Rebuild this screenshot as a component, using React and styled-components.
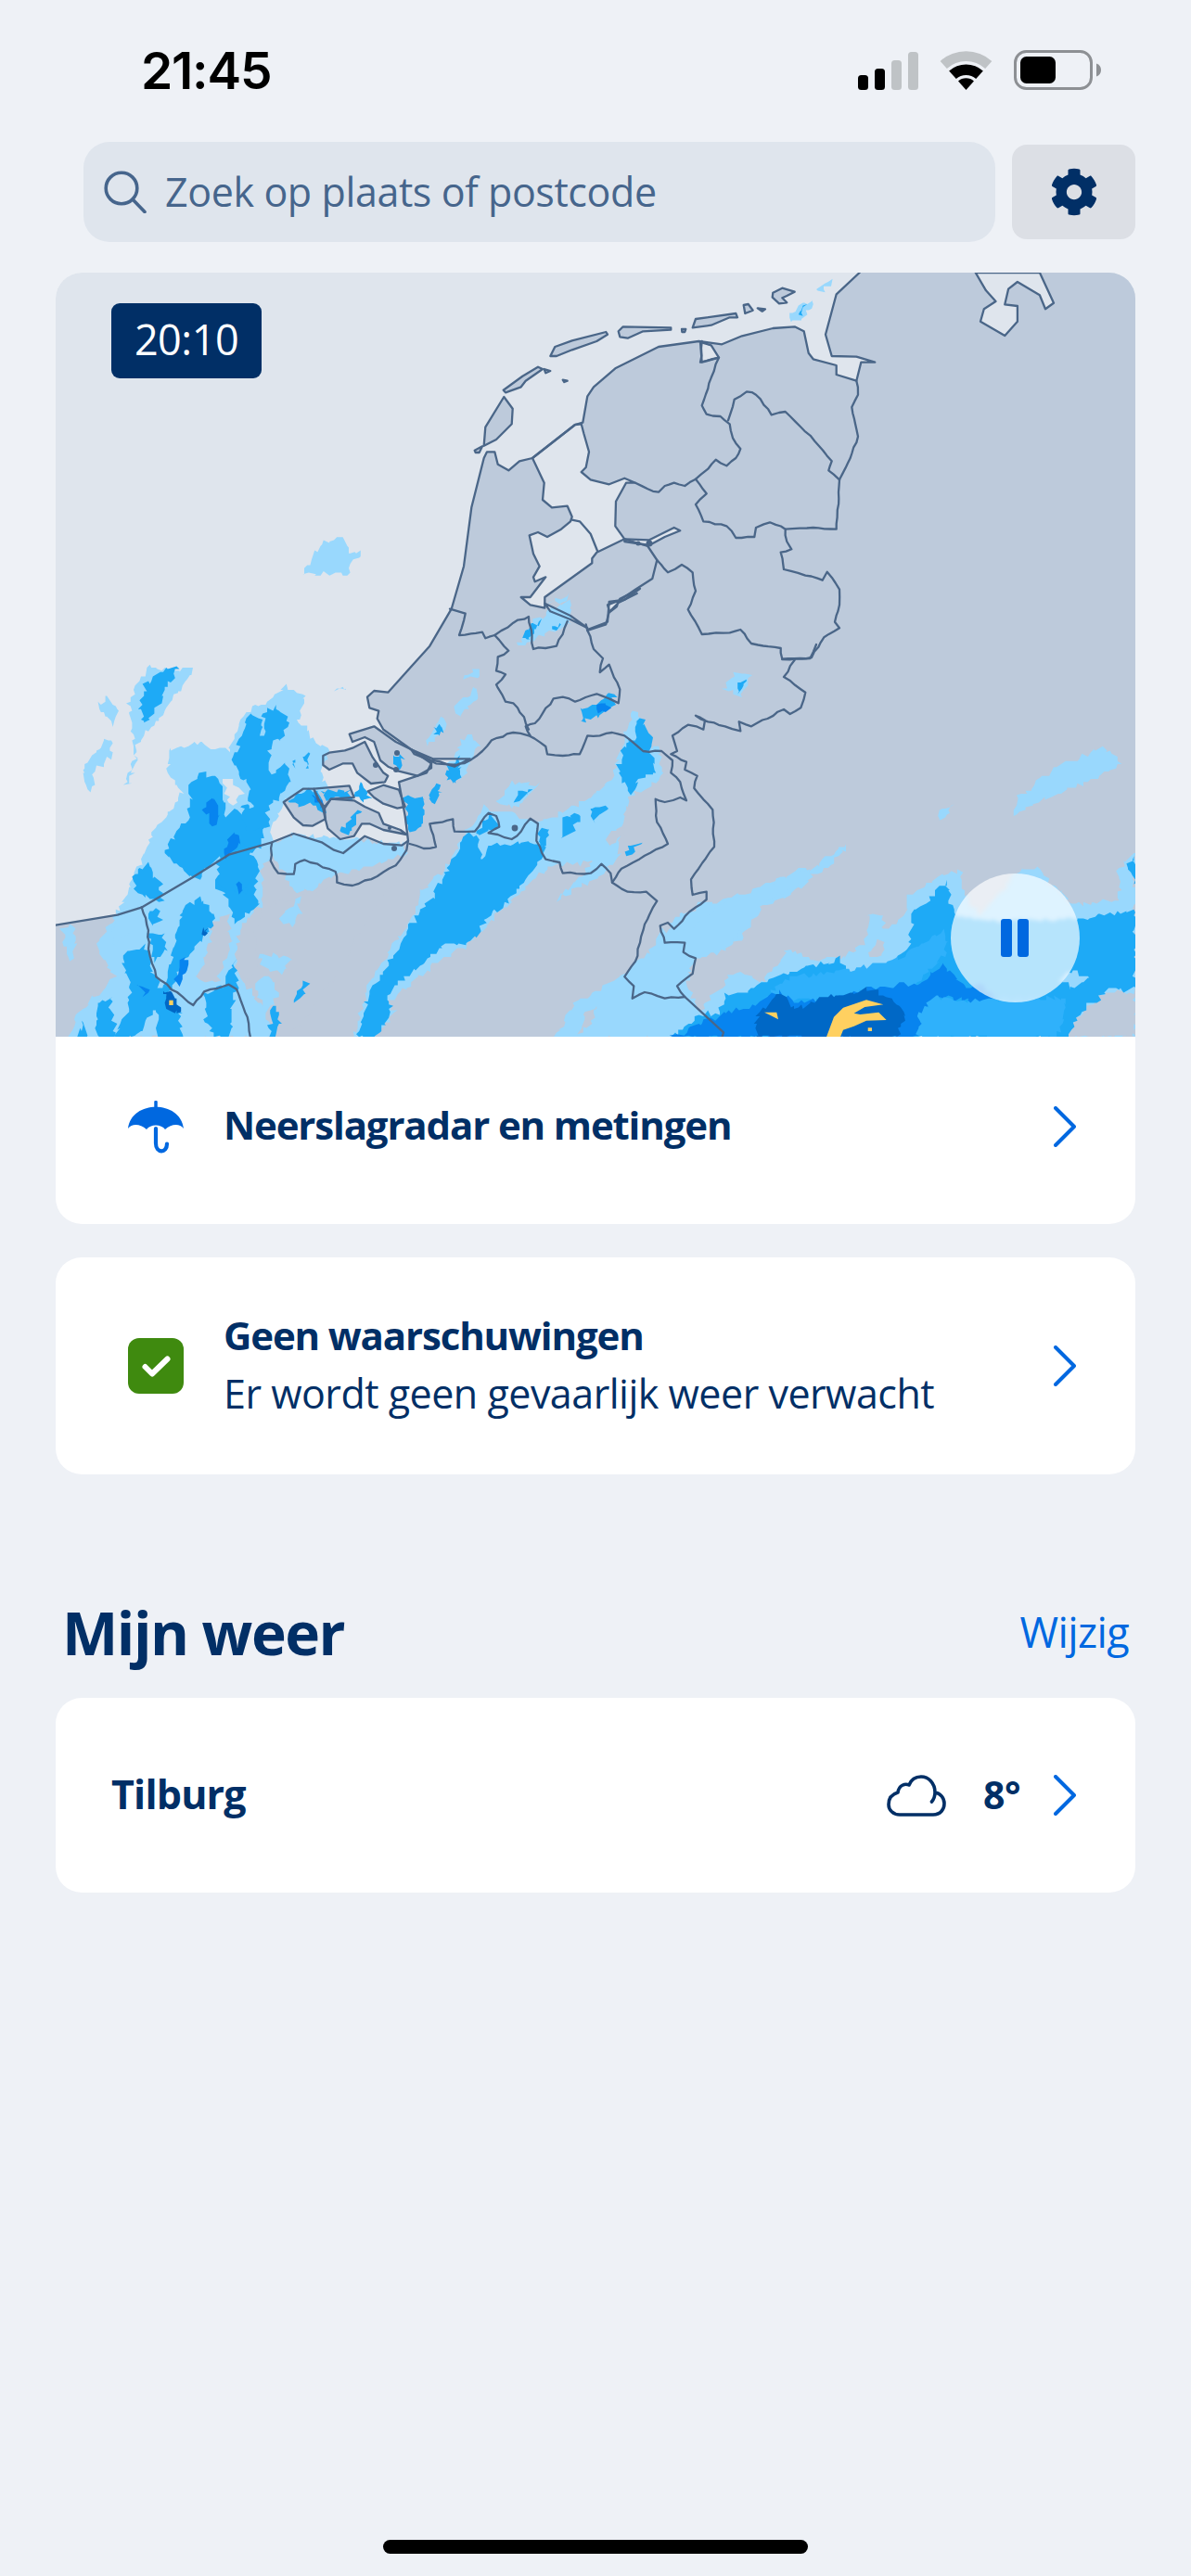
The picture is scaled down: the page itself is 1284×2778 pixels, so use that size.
import React from 'react';
import styled, { createGlobalStyle } from 'styled-components';
import { FaCog } from 'react-icons/fa';

const Global = createGlobalStyle`
  html, body { margin: 0; padding: 0; background: #eef1f6; }
  * { box-sizing: border-box; }
`;

const navy = '#012f66';
const blue = '#0068e0';
const sans = '"Open Sans", "Noto Sans", sans-serif';

const Page = styled.div`
  width: 1284px;
  height: 2778px;
  background: #eef1f6;
  font-family: ${sans};
  color: ${navy};
  display: flex;
  flex-direction: column;
  overflow: hidden;
`;
const StatusBar = styled.div`
  height: 153px;
  padding: 54px 97px 0 152px;
  display: flex;
  justify-content: space-between;
  align-items: flex-start;
`;
const Clock = styled.div`
  font-family: Inter, "Liberation Sans", sans-serif;
  font-weight: 600;
  font-size: 55px;
  line-height: 44px;
  color: #000;
  letter-spacing: -1.2px;
`;
const StatusIcons = styled.div`
  display: flex;
  align-items: flex-end;
  gap: 23px;
`;
const SearchRow = styled.div`
  display: flex;
  align-items: center;
  gap: 18px;
  padding: 0 60px 0 90px;
`;
const SearchBox = styled.div`
  flex: 1;
  height: 108px;
  border-radius: 28px;
  background: #dfe5ed;
  display: flex;
  align-items: center;
  gap: 20px;
  padding: 0 0 0 22px;
`;
const Placeholder = styled.span`
  font-size: 43px;
  letter-spacing: -0.4px;
  color: #46658c;
  position: relative;
  top: -1px;
`;
const SettingsButton = styled.div`
  width: 133px;
  height: 102px;
  border-radius: 16px;
  background: #dcdfe5;
  display: flex;
  align-items: center;
  justify-content: center;
  color: ${navy};
`;
const Card = styled.div`
  margin: ${p => p.$top}px 60px 0;
  background: #fff;
  border-radius: 28px;
  overflow: hidden;
`;
const MapArea = styled.div`
  position: relative;
  height: 824px;
  background: #dfe5ed;
  svg { display: block; }
`;
const TimeBadge = styled.div`
  position: absolute;
  left: 60px;
  top: 33px;
  width: 162px;
  height: 81px;
  border-radius: 9px;
  background: ${navy};
  color: #fff;
  font-size: 45px;
  line-height: 78px;
  display: flex;
  align-items: flex-start;
  justify-content: center;
  letter-spacing: -0.5px;
`;
const PauseButton = styled.div`
  position: absolute;
  left: 964.5px;
  top: 647.5px;
  width: 139px;
  height: 139px;
  border-radius: 50%;
  background: rgba(255, 255, 255, 0.68);
  backdrop-filter: blur(2px);
  display: flex;
  align-items: center;
  justify-content: center;
  gap: 6px;
`;
const PauseBar = styled.span`
  width: 12px;
  height: 41px;
  border-radius: 3px;
  background: ${blue};
`;
const Row = styled.div`
  height: ${p => p.$h}px;
  padding: ${p => p.$pt || 0}px 64px ${p => p.$pb || 0}px 78px;
  display: flex;
  align-items: center;
`;
const IconSlot = styled.div`
  width: 60px;
  flex: none;
  margin-right: 43px;
  display: flex;
  svg { display: block; }
`;
const RowText = styled.div`
  flex: 1;
  display: flex;
  flex-direction: column;
`;
const RowTitle = styled.div`
  font-size: 42px;
  font-weight: 700;
  line-height: 62px;
  letter-spacing: -1.15px;
  position: relative;
  top: -2px;
`;
const RowSub = styled.div`
  font-size: 43px;
  line-height: 62px;
  letter-spacing: -0.5px;
  position: relative;
  top: -1px;
`;
const SectionHead = styled.div`
  margin-top: 122px;
  height: 98px;
  padding: 0 7px 0 7px;
  margin-left: 60px;
  margin-right: 60px;
  display: flex;
  justify-content: space-between;
  align-items: baseline;
`;
const SectionTitle = styled.h2`
  margin: 0;
  font-size: 64px;
  line-height: 98px;
  font-weight: 700;
  letter-spacing: -1.5px;
`;
const EditLink = styled.span`
  font-size: 45px;
  color: ${blue};
  letter-spacing: -0.6px;
  position: relative;
  top: -8px;
`;
const PlaceRow = styled.div`
  height: 210px;
  padding: 0 64px 0 60px;
  display: flex;
  align-items: center;
`;
const PlaceName = styled.div`
  flex: 1;
  font-size: 43px;
  font-weight: 700;
  letter-spacing: -0.8px;
  position: relative;
  top: -2px;
`;
const Temp = styled.div`
  font-size: 41px;
  font-weight: 700;
  margin: 0 36px 0 40px;
  letter-spacing: -0.5px;
  position: relative;
  top: -1px;
`;
const HomeBar = styled.div`
  margin: auto auto 24px;
  width: 458px;
  height: 15px;
  border-radius: 8px;
  background: #000;
`;

/* map geometry helpers: points are written in the coordinates of the traced crops */
const frames = {
  a: [60, 720, 3, 3],
  b: [500, 294, 3, 3],
  c: [380, 640, 3, 3],
  d: [724, 760, 3, 3],
  e: [60, 290, 1.329, 3],
};
const pts = (f, s) =>
  s.trim().split(/\s+/).map(p => {
    const [x, y] = p.split(',').map(Number);
    const t = frames[f];
    return [t[0] + x / t[2], t[1] + y / t[3]];
  });
const toD = list => 'M' + list.map(p => `${p[0].toFixed(1)} ${p[1].toFixed(1)}`).join('L');
const open = (f, s) => toD(pts(f, s));
const shut = (f, s) => open(f, s) + 'Z';

let seed = 12345;
const rnd = () => {
  seed = (seed * 1664525 + 1013904223) % 4294967296;
  return seed / 4294967296;
};
const jag = (f, s) => {
  const p = pts(f, s);
  const out = [];
  p.forEach((a, i) => {
    const b = p[(i + 1) % p.length];
    const len = Math.hypot(b[0] - a[0], b[1] - a[1]);
    const n = Math.max(1, Math.round(len / 4));
    for (let k = 0; k < n; k++) {
      const x = a[0] + ((b[0] - a[0]) * k) / n + (rnd() - 0.5) * 6;
      const y = a[1] + ((b[1] - a[1]) * k) / n + (rnd() - 0.5) * 6;
      out.push([Math.round(x / 1.6) * 1.6, Math.round(y / 1.6) * 1.6]);
    }
  });
  return toD(out) + 'Z';
};
const wobble = (f, s) => {
  const p = pts(f, s);
  const out = [];
  p.forEach((a, i) => {
    const b = p[i + 1];
    if (!b) { out.push(a); return; }
    const len = Math.hypot(b[0] - a[0], b[1] - a[1]);
    const n = Math.max(1, Math.round(len / 7));
    for (let k = 0; k < n; k++) {
      const j = k === 0 ? 0 : 1.8;
      out.push([
        a[0] + ((b[0] - a[0]) * k) / n + (rnd() - 0.5) * j,
        a[1] + ((b[1] - a[1]) * k) / n + (rnd() - 0.5) * j,
      ]);
    }
  });
  return toD(out);
};

const coastA =
  open('a', '0,833 200,800 280,775 440,680 560,605 700,565 770,537 860,565 900,590 930,600 1000,545 1060,570 1120,575 1140,560 1130,480 1110,370 1200,340 1215,310 1150,265 1060,200 1040,165 1045,140 1015,130 1008,95 1030,75 1075,80 1147,0') +
  open('c', '250,170 320,50').replace('M', 'L') +
  open('b', '0,950 25,760 65,600 75,580 100,580 110,620 145,640 180,610 222,600 360,492 385,485 400,400 420,370 490,310 630,240 760,222 835,232 900,205 1000,180 1070,175 1100,190 1115,260 1130,280 1205,300 1205,330 1270,350 1285,290 1330,290 1270,272 1190,270 1170,200 1205,70 1280,0').replace('M', 'L');
const landFill = coastA + 'L1224 294L1224 1118L60 1118Z';

const waterShapes = [
  shut('b', '222,600 360,492 380,490 388,520 405,580 395,630 380,645 410,670 470,685 520,665 555,680 525,680 492,740 490,820 520,862 430,905 415,925 415,940 262,1050 262,1085 215,1075 185,1050 215,1050 265,985 230,1000 225,985 245,950 225,910 212,850 240,840 270,855 315,830 345,805 350,790 335,755 285,760 255,735 260,680'),
  shut('b', '262,1070 345,1110 400,1150 345,1122 280,1096'),
  shut('b', '465,1075 500,1062 495,1080 472,1098'),
  shut('b', '505,1055 570,1022 520,1058 500,1066'),
  shut('b', '520,862 600,865 680,825 700,835 650,855 600,882 520,870'),
  shut('b', '765,225 800,235 825,275 770,290'),
  shut('a', '1150,265 1220,295 1340,295 1300,315 1230,310 1210,300 1160,280'),
  shut('e', '1318,12 1333,70 1347,105 1330,130 1325,170 1360,216 1378,170 1378,120 1360,115 1365,65 1378,42 1410,85 1418,130 1430,110 1410,12'),
];
const islands = [
  'b|65,560 70,500 130,402 158,440 155,490 105,540',
  'b|35,575 60,562 50,582 38,582',
  'b|128,380 190,335 240,305 255,312 200,350 185,370 135,388',
  'b|280,270 295,240 350,220 460,192 465,200 430,222 350,250 300,270',
  'b|500,190 515,175 670,178 670,185 580,190 530,212 505,208',
  'b|740,178 750,150 880,132 885,145 860,145 800,170',
  'b|905,105 920,102 935,122 910,132',
  'b|950,115 975,118 965,125',
  'b|1000,65 1030,50 1070,62 1045,75 1030,82 1045,97 1020,100 998,80',
  'b|260,312 280,318 265,325',
  'b|320,347 335,350 325,354',
  'b|705,183 718,183 715,192 706,192',
  'a|950,215 1030,190 1100,240 1150,265 1215,300 1215,325 1170,350 1110,335 1075,320 1050,300 1030,240 1000,225 960,240',
  'a|935,268 960,260 1000,240 1025,290 1060,340 1075,350 1065,370 1020,375 975,340 960,310 930,310 885,330 865,315 865,285 885,275',
  'a|835,392 950,382 965,420 890,425 870,450 850,430',
  'a|737,435 800,392 835,392 865,455 872,490 830,512 800,510 770,485',
  'a|870,455 890,425 965,430 1000,450 1045,470 1060,505 1115,525 1135,540 1060,525 1015,505 990,505 965,545 920,555 880,520 872,490',
  'a|1010,400 1060,380 1110,395 1130,450 1105,455 1060,440 1030,420',
].map(s => { const [f, v] = s.split('|'); return shut(f, v); });

const borders = [
  wobble('a', '278,775 300,850 300,910 325,1000 445,1092 480,1048 560,1025 585,1040 620,1130 630,1197'),
  wobble('a', '700,565 695,625 720,665 770,668 775,635 805,622 905,660 910,695 960,705 1040,675 1100,640 1135,590 1140,560'),
  wobble('b', '770,222 765,290 825,275 800,340 790,375 770,430 785,458 830,465 860,490 870,535 895,570 880,600 850,625 815,605 790,635 750,668 715,690 680,680 650,690 630,710 595,700 555,680'),
  wobble('b', '855,478 875,410 915,385 945,395 995,460 1040,450 1135,545 1190,610 1180,640 1215,670'),
  wobble('b', '1270,350 1275,395 1255,435 1275,530 1250,600 1215,670 1205,830 1130,825 1040,830'),
  wobble('b', '750,668 785,715 750,750 775,805 850,820 880,858 940,855 945,825 990,808 1040,830 1045,870 1060,895 1025,905 1035,960 1105,980 1160,995 1175,968 1215,1025 1215,1075 1200,1130 1215,1150 1165,1180 1125,1245 1030,1250 1025,1215 930,1200 895,1155 860,1165 770,1170 725,1090 750,1030 740,970 705,945 660,970 625,930'),
  open('b', '350,800 375,805 410,845 432,900'),
  open('b', '595,885 625,930 610,990 555,1025 505,1060 470,1065 465,1130 400,1155'),
  open('b', '520,862 595,885'),
  wobble('c', '1390,213 1480,210 1500,165'),
  wobble('c', '1430,215 1395,270 1465,320 1450,370 1415,390 1395,375 1290,430 1250,415 1255,445 1205,430 1150,415 1110,395 1140,410 1135,440 1085,425 1035,460 1050,510 1030,520 1080,545 1075,570 1115,590 1105,630 1165,700 1170,820 1095,925 1100,975 1145,965 1145,990 1090,1030 1040,1085 1020,1065 995,1075 1010,1130 1075,1130 1070,1160 1110,1180 1100,1230 1050,1270 1075,1305 1010,1310 945,1290 905,1310 910,1270 880,1240 915,1190 930,1130 945,1070 960,1040 985,995 950,965 890,965 840,935 835,905 805,875 770,905 680,905 670,870 625,860 595,800 600,745 575,728 545,770 515,795 470,780 440,775 475,755 465,720 440,710 395,770 330,770 325,730 250,745 270,820 230,825 185,810'),
  open('c', '1075,1305 1200,1420 1195,1437'),
  wobble('c', '840,935 870,890 1020,810 985,740 980,665 1010,675 1060,660 1080,670 1060,610 1030,580 1035,540 1000,510 940,510 880,460 840,450 800,460 760,460 735,520 680,525 630,520 625,495 570,460 520,450 450,475 420,510 380,540 330,560 260,540'),
  wobble('c', '575,460 560,430 590,420 650,340 680,335 720,350 790,325 860,355 865,310 830,230 800,255 810,210 780,180 760,120 755,100'),
  wobble('c', '570,440 555,400 520,355 495,350 470,305 465,295 495,262 465,250 470,205 505,185 460,135 430,145 420,125 345,135 365,65 315,50'),
  wobble('c', '460,135 520,95 570,75 585,180 660,170 695,90'),
  open('c', '760,120 820,100 830,60 860,30 920,0'),
];

const L = '#99d8fd', M = '#1eaaf6', M2 = '#2fb1fb', D = '#0784ef', X = '#0068c6', Y = '#ffd060';
const rainSets = [
  [L, 'a', '300,0 440,10 420,50 370,110 330,170 300,200 270,230 240,380 225,385 260,290 250,220 235,110 270,50'],
  [L, 'a', '140,130 165,90 200,130 190,185 150,150'],
  [L, 'a', '85,330 130,270 170,225 185,280 130,330 115,395'],
  [L, 'a', '900,70 925,55 945,68'],
  [L, 'a', '365,265 470,245 560,270 610,150 700,100 745,60 805,85 780,170 830,220 880,270 860,340 880,395 740,430 700,520 700,570 770,540 1000,560 1130,570 1135,600 1000,650 880,680 830,720 770,720 700,600 670,640 660,770 600,830 580,920 590,1000 650,1070 720,1197 40,1197 70,1130 130,1060 190,1000 130,900 190,810 220,750 270,640 320,530 390,430 410,400 365,330'],
  [L, 'a', '20,840 60,830 70,900 50,950'],
  [L, 'a', '190,800 290,760 240,860 180,900'],
  ['#dfe5ed', 'a', '540,350 575,370 610,410 570,440 550,400'],
  ['#bdcadb', 'a', '505,830 560,800 565,900 545,960 520,1020 460,1000 500,900'],
  ['#bdcadb', 'a', '610,1000 650,990 660,960 640,850 680,770 790,740 1140,620 900,1000 760,1197 730,1197 670,1060'],
  [L, 'a', '655,935 700,930 760,945 730,990 690,985'],
  [L, 'a', '655,1010 700,1000 720,1070 680,1110 650,1060'],
  [L, 'a', '720,810 790,745 790,800 760,835'],
  [L, 'c', '430,690 600,740 740,680 830,610 880,490 990,500 1000,600 900,660 860,760 860,860 780,930 660,990 780,870 640,880 560,950 430,1080 370,1145 290,1180 110,1330 140,1350 70,1437 0,1437 60,1250 200,1040 210,970 310,880 360,780'],
  ['#bdcadb', 'c', '820,790 880,750 870,790 830,820'],
  [L, 'c', '910,375 960,460 880,500 890,430'],
  [L, 'c', '530,175 590,85 700,20 710,100 640,125 570,155'],
  [L, 'c', '625,40 650,20 700,0 690,20'],
  [L, 'c', '1200,310 1240,260 1290,270 1250,330'],
  [L, 'c', '240,490 280,400 300,410 290,450'],
  [L, 'c', '330,360 400,300 405,345 345,400'],
  [L, 'c', '330,540 350,470 385,465 415,490 350,600 300,560'],
  [L, 'c', '470,670 510,610 600,620 530,695'],
  [L, 'c', '360,280 400,240 420,250 400,270'],
  [L, 'b', '1050,130 1120,90 1135,100 1090,150 1060,165'],
  [L, 'b', '1145,45 1185,25 1165,65'],
  [L, 'e', '352,990 385,880 415,870 420,925 438,920 415,985 380,985'],
  [L, 'd', '0,700 100,640 270,620 340,570 430,530 440,580 350,630 280,660 220,760 170,790 70,760 80,820 50,870 20,910 40,950 90,1000 0,1077'],
  [L, 'd', '440,550 500,490 570,455 520,510 470,540'],
  [L, 'd', '1110,365 1120,300 1250,200 1400,140 1450,190 1350,245 1150,330'],
  [L, 'd', '865,370 865,340 905,325 900,355'],
  [L, 'c', '655,1437 720,1320 800,1280 870,1240 960,1160 1000,1090 1100,1080 1210,990 1300,960 1370,930 1480,890 1480,920 1340,1000 1280,1070 1210,1160 1100,1180 1080,1270 1180,1437'],
  [L, 'd', '0,1077 50,1030 190,880 240,870 290,900 370,800 400,800 450,825 560,820 620,770 640,680 680,680 690,730 760,680 760,620 880,545 940,540 950,610 1000,680 1130,525 1180,530 1300,650 1450,630 1440,540 1500,475 1500,1077'],
  ['#bdcadb', 'd', '640,790 680,760 690,800 650,815'],
  ['#bdcadb', 'd', '1500,930 1400,930 1340,980 1260,1077 1500,1077'],
  ['#bdcadb', 'c', '730,1420 760,1350 790,1330 770,1400'],
  [M, 'a', '290,60 330,20 360,0 395,0 360,70 320,130 295,180 270,130'],
  [M, 'a', '575,310 600,210 630,155 665,165 665,220 680,230 670,160 710,120 750,170 740,220 700,240 690,310 700,350 740,310 760,350 730,410 680,470 640,460 620,380'],
  [M, 'a', '425,370 470,345 520,350 540,420 550,480 580,460 650,480 680,540 650,590 620,600 660,650 640,700 655,770 600,810 580,830 560,760 520,700 540,640 520,620 460,680 430,680 400,640 355,600 385,540 420,500 440,430'],
  [M, 'a', '520,620 600,560 660,640 610,730 530,710'],
  [M, 'a', '600,440 680,460 690,520 620,530'],
  [M, 'a', '250,685 295,635 340,700 345,760 300,740 265,730'],
  [M, 'a', '300,790 330,780 340,810 310,830'],
  [M, 'a', '410,790 460,745 520,800 490,860 460,900 420,940 400,985 380,1040 345,1060 370,980 380,900'],
  [M, 'a', '300,860 350,860 360,920 320,950'],
  [M, 'a', '210,930 290,900 310,980 340,1040 400,1110 410,1197 340,1197 320,1100 260,1197 190,1197 230,1120 240,1040'],
  [M, 'a', '130,1100 175,1065 195,1197 130,1197'],
  [M, 'a', '70,1197 90,1145 105,1197'],
  [M, 'a', '480,1060 540,1030 580,950 590,1020 580,1060 560,1197 510,1197 480,1110'],
  [M, 'a', '690,1197 700,1100 730,1110 715,1197'],
  [M, 'a', '770,1080 800,1015 815,1030 790,1075'],
  [M, 'a', '1205,430 1230,380 1240,400 1220,440'],
  [M, 'a', '755,425 800,400 840,400 870,470 830,440 770,445'],
  [M, 'a', '860,400 950,395 955,420 880,425'],
  [M, 'a', '960,400 990,370 1020,420 990,440 965,420'],
  [M, 'a', '920,530 960,480 1000,450 960,510 950,550'],
  [M, 'a', '1095,280 1125,290 1110,330 1085,310'],
  [M, 'a', '1130,420 1190,420 1180,510 1145,520'],
  [M, 'a', '1265,330 1310,320 1300,365 1270,365'],
  [M, 'a', '800,280 820,285 815,330'],
  [M, 'a', '770,290 780,320 765,320'],
  [M, 'a', '1230,190 1250,185 1250,210 1230,215'],
  [M, 'c', '20,1420 55,1290 130,1180 180,1100 210,1040 260,980 300,900 350,820 370,770 400,790 420,860 450,810 540,810 620,800 620,840 540,950 500,1000 440,1050 370,1140 300,1130 240,1180 110,1300 130,1340 80,1437 10,1437'],
  [M, 'c', '400,770 440,710 475,750 420,780'],
  [M, 'c', '600,800 610,760 635,760 630,830'],
  [M, 'c', '680,730 735,710 715,770 680,790'],
  [M, 'c', '770,690 825,690 800,720 780,740'],
  [M, 'c', '880,480 910,470 910,415 940,410 970,460 965,510 985,580 930,600 900,650 880,610 855,580'],
  [M, 'c', '875,835 930,800 925,815 885,850'],
  [M, 'c', '735,375 790,360 820,325 850,330 840,360 790,395 740,420'],
  [M, 'c', '545,135 580,105 610,90 590,120 570,155'],
  [M, 'c', '640,105 670,100 665,120'],
  [M, 'c', '1240,290 1280,285 1250,320'],
  [M, 'c', '270,445 290,425 280,450'],
  [M, 'c', '245,660 270,620 285,630 265,680'],
  [M, 'c', '550,635 575,630 570,650 525,670'],
  [M, 'c', '310,560 345,530 345,600 315,610'],
  [M, 'c', '175,660 225,665 225,740 190,770'],
  [M, 'b', '1080,120 1110,105 1095,135'],
  [M, 'd', '1470,530 1500,495 1500,580'],
  [M, 'd', '150,1000 180,940 230,930 290,900 380,870 550,820 560,860 550,890 720,830 770,780 780,680 890,570 910,680 1000,700 1320,690 1500,665 1500,920 1420,925 1330,990 1270,1077 0,1077 100,1000'],
  [L, 'd', '1255,895 1290,860 1360,880 1300,920'],
  [M2, 'd', '300,950 360,900 400,880 560,860 720,830 780,790 880,730 890,800 800,900 740,920 650,920 500,960 380,950'],
  [D, 'd', '0,1077 100,1030 280,960 350,930 400,960 500,960 650,915 800,900 880,840 950,920 1000,900 1040,960 980,960 870,945 800,1000 830,1077'],
  [D, 'd', '1000,930 1050,950 1000,1000 930,1000'],
  [M2, 'd', '800,1000 850,945 950,960 1050,950 1280,950 1250,1077 800,1077'],
  [D, 'a', '470,450 510,420 530,470 510,510'],
  [D, 'a', '565,540 580,520 600,575 545,610'],
  [D, 'a', '590,690 610,720 590,725'],
  [D, 'a', '380,1010 410,930 425,960 400,1030'],
  [D, 'a', '270,1020 300,1040 290,1060'],
  [D, 'c', '795,365 820,340 830,370 800,385'],
  [D, 'a', '830,410 860,430 860,455'],
  [X, 'a', '350,1040 385,1065 410,1105 380,1120 355,1090'],
  [X, 'a', '470,845 490,845 480,875'],
  [X, 'd', '280,1000 350,930 400,990 480,950 640,920 730,960 760,1000 730,1077 270,1077'],
  [Y, 'a', '367,1076 380,1076 380,1092 367,1092'],
  [Y, 'd', '300,995 340,995 345,1018 320,1005'],
  [Y, 'd', '500,1077 525,1010 555,980 630,955 685,970 625,978 590,998 610,1002 670,995 695,1020 630,1022 590,1040 555,1052 545,1077'],
  [Y, 'd', '635,1045 648,1045 648,1056 635,1056'],
];
const rain = rainSets.map(([c, f, s]) => {
  const solid = c === Y;
  return [c, solid ? shut(f, s) : jag(f, s)];
});

const MapDrawing = () => (
  <svg width="1164" height="824" viewBox="60 294 1164 824">
    <path d={landFill} fill="#bdcadb" />
    {waterShapes.map((d, i) => <path key={i} d={d} fill="#dfe5ed" />)}
    {islands.map((d, i) => <path key={i} d={d} fill="#bdcadb" />)}
    {rain.map(([c, d], i) => <path key={i} d={d} fill={c} />)}
    <g fill="none" stroke="#4a6688" strokeWidth="2.300" strokeLinejoin="round" strokeLinecap="round">
      <path d={coastA} />
      {waterShapes.map((d, i) => <path key={i} d={d} />)}
      {islands.map((d, i) => <path key={i} d={d} />)}
      {borders.map((d, i) => <path key={i} d={d} />)}
    </g>
    <g fill="#4a6688">
      <circle cx="555" cy="893" r="3.400" />
      <circle cx="700" cy="586" r="3.500" />
      <circle cx="688" cy="586" r="2.500" />
      <circle cx="420" cy="893" r="2" />
      <circle cx="425" cy="915" r="3" />
      <circle cx="405" cy="825" r="3" />
      <circle cx="428" cy="812" r="3" />
      <circle cx="427" cy="830" r="3" />
    </g>
  </svg>
);

const Chevron = () => (
  <svg width="24" height="44" viewBox="0 0 24 44" style={{ flex: 'none', display: 'block' }}>
    <path d="M2 2 L22 22 L2 42" fill="none" stroke={blue} strokeWidth="4" strokeLinecap="round" strokeLinejoin="round" />
  </svg>
);

const sector = (r1, r2) => {
  const a = Math.PI / 4.3;
  const sx = Math.sin(a), cy = Math.cos(a);
  const cx0 = 28.5, cy0 = 42;
  if (r1 === 0) {
    return `M${cx0} ${cy0}L${cx0 - r2 * sx} ${cy0 - r2 * cy}A${r2} ${r2} 0 0 1 ${cx0 + r2 * sx} ${cy0 - r2 * cy}Z`;
  }
  return `M${cx0 - r1 * sx} ${cy0 - r1 * cy}L${cx0 - r2 * sx} ${cy0 - r2 * cy}A${r2} ${r2} 0 0 1 ${cx0 + r2 * sx} ${cy0 - r2 * cy}L${cx0 + r1 * sx} ${cy0 - r1 * cy}A${r1} ${r1} 0 0 0 ${cx0 - r1 * sx} ${cy0 - r1 * cy}Z`;
};

const Signal = () => (
  <svg width="65" height="41" viewBox="0 0 65 41" style={{ display: 'block' }}>
    <rect x="0" y="25" width="11" height="16" rx="3.500" fill="#000" />
    <rect x="18" y="18" width="11" height="23" rx="3.500" fill="#000" />
    <rect x="36" y="9" width="11" height="32" rx="3.500" fill="#bfc3c6" />
    <rect x="54" y="0" width="11" height="41" rx="3.500" fill="#bfc3c6" />
  </svg>
);
const Wifi = () => (
  <svg width="57" height="42" viewBox="0 0 57 42" style={{ display: 'block' }}>
    <path d={sector(31, 41.7)} fill="#bfc3c6" />
    <path d={sector(16, 27.5)} fill="#000" />
    <path d={sector(0, 12.7)} fill="#000" />
  </svg>
);
const Battery = () => (
  <svg width="94" height="43" viewBox="0 0 94 43" style={{ display: 'block' }}>
    <rect x="1.500" y="1.500" width="82" height="40" rx="12" fill="none" stroke="#8d9094" strokeWidth="3" />
    <rect x="7" y="7" width="38" height="29" rx="6.500" fill="#000" />
    <path d="M89 14.500 C92 15.500 94 18 94 21.500 C94 25 92 27.500 89 28.500 Z" fill="#8d9094" />
  </svg>
);
const SearchIcon = () => (
  <svg width="46" height="46" viewBox="0 0 46 46" style={{ flex: 'none', display: 'block' }}>
    <circle cx="19" cy="19" r="16.800" fill="none" stroke="#46658c" strokeWidth="3.600" />
    <path d="M31 31 L44 44.500" fill="none" stroke="#46658c" strokeWidth="3.600" strokeLinecap="round" />
  </svg>
);
const Umbrella = () => (
  <svg width="60" height="57" viewBox="0 0 60 57">
    <path d="M0 30 C2 14 16 6.700 30 6.700 C44 6.700 58 14 60 30 C56 24.500 47 24.500 40 31 C36 25 24 25 20 31 C13 24.500 4 24.500 0 30 Z" fill={blue} />
    <path d="M30 1.500 V8" stroke={blue} strokeWidth="3.500" strokeLinecap="round" />
    <path d="M30 30 V46 C30 57 42 57 42 46.500" fill="none" stroke={blue} strokeWidth="4.200" strokeLinecap="round" />
  </svg>
);
const CheckBadge = () => (
  <svg width="60" height="60" viewBox="0 0 60 60">
    <rect width="60" height="60" rx="12" fill="#3f8a0f" />
    <path d="M18.500 31 L26 38.500 L42.500 22.500" fill="none" stroke="#fff" strokeWidth="6" strokeLinecap="round" strokeLinejoin="round" />
  </svg>
);
const Cloud = () => (
  <svg width="64" height="45" viewBox="0 0 64 45" style={{ flex: 'none', display: 'block' }}>
    <path d="M14 43 H50 C58 43 62 37 62 31 C62 25 58 20 52 19 C52 9 45 2 37 2 C30 2 26 6 24 11 C20 9 13 11 12 19 C5 21 2 26 2 32 C2 38 7 43 14 43 Z M52 19 C52 23 51 26 48.500 29" fill="none" stroke={navy} strokeWidth="3.600" strokeLinejoin="round" strokeLinecap="round" />
  </svg>
);

export default function App() {
  return (
    <Page>
      <Global />
      <StatusBar>
        <Clock>21:45</Clock>
        <StatusIcons>
          <Signal />
          <Wifi />
          <Battery />
        </StatusIcons>
      </StatusBar>
      <SearchRow>
        <SearchBox>
          <SearchIcon />
          <Placeholder>Zoek op plaats of postcode</Placeholder>
        </SearchBox>
        <SettingsButton><FaCog size={52} /></SettingsButton>
      </SearchRow>
      <Card $top={33}>
        <MapArea>
          <MapDrawing />
          <TimeBadge>20:10</TimeBadge>
          <PauseButton><PauseBar /><PauseBar /></PauseButton>
        </MapArea>
        <Row $h={202} $pb={8}>
          <IconSlot><Umbrella /></IconSlot>
          <RowText><RowTitle>Neerslagradar en metingen</RowTitle></RowText>
          <Chevron />
        </Row>
      </Card>
      <Card $top={36}>
        <Row $h={234}>
          <IconSlot><CheckBadge /></IconSlot>
          <RowText>
            <RowTitle>Geen waarschuwingen</RowTitle>
            <RowSub>Er wordt geen gevaarlijk weer verwacht</RowSub>
          </RowText>
          <Chevron />
        </Row>
      </Card>
      <SectionHead>
        <SectionTitle>Mijn weer</SectionTitle>
        <EditLink>Wijzig</EditLink>
      </SectionHead>
      <Card $top={21}>
        <PlaceRow>
          <PlaceName>Tilburg</PlaceName>
          <Cloud />
          <Temp>8°</Temp>
          <Chevron />
        </PlaceRow>
      </Card>
      <HomeBar />
    </Page>
  );
}
